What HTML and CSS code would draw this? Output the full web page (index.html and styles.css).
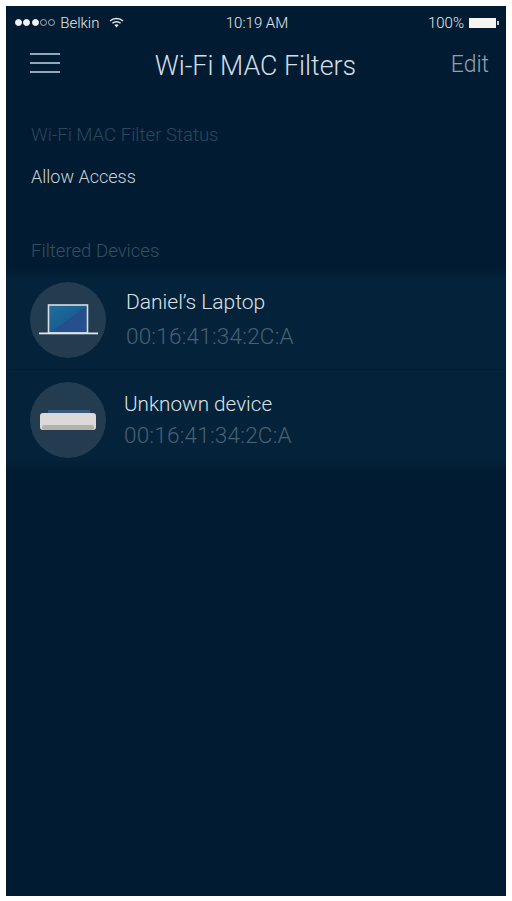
FILE: index.html
```html
<!DOCTYPE html>
<html lang="en">
  <head>
    <meta charset="UTF-8" />
    <title>Wi-Fi MAC Filters</title>
    <link rel="stylesheet" href="styles.css">
  </head>
  <body>
    <div class="phone">
      <div class="status-bar">
        <div class="carrier">
          <span class="dots"><i class="on"></i><i class="on"></i><i class="on"></i><i></i><i></i></span>
          <span>Belkin</span>
          <svg class="wifi" width="15" height="11" viewBox="0 0 15 11">
            <path d="M1 4 C4.5 .8 10.5 .8 14 4" fill="none" stroke="#e4e8ec" stroke-width="1.5" />
            <path d="M3.4 6.2 C5.6 4.2 9.4 4.2 11.6 6.2" fill="none" stroke="#e4e8ec" stroke-width="1.5" />
            <path d="M5.4 8 C6.6 7 8.4 7 9.6 8 L7.5 10.4 Z" fill="#e4e8ec" />
          </svg>
        </div>
        <div class="clock">10:19 AM</div>
        <div class="battery">
          <span>100%</span>
          <span class="batt-body"></span>
          <span class="batt-tip"></span>
        </div>
      </div>

      <div class="nav">
        <div class="burger"><i></i><i></i><i></i></div>
        <div class="nav-title">Wi-Fi MAC Filters</div>
        <div class="nav-edit">Edit</div>
      </div>

      <div class="section-label status-label">Wi-Fi MAC Filter Status</div>
      <div class="status-value">Allow Access</div>

      <div class="section-label devices-label">Filtered Devices</div>

      <div class="device first">
        <div class="avatar">
          <svg width="62" height="36" viewBox="0 0 62 36">
            <defs>
              <linearGradient id="screen" x1="0" y1="0" x2="1" y2="1">
                <stop offset="0" stop-color="#1f6f9e" />
                <stop offset="0.5" stop-color="#1a5f92" />
                <stop offset="0.52" stop-color="#234f8c" />
                <stop offset="1" stop-color="#27508f" />
              </linearGradient>
            </defs>
            <rect x="11.5" y="3" width="39" height="28" fill="url(#screen)" stroke="#d8dee2" stroke-width="1.6" />
            <rect x="2" y="30.5" width="59" height="1.8" fill="#e2e6e8" />
          </svg>
        </div>
        <div class="device-text">
          <div class="device-name">Daniel’s Laptop</div>
          <div class="device-mac">00:16:41:34:2C:A</div>
        </div>
      </div>

      <div class="device second">
        <div class="avatar">
          <svg width="62" height="36" viewBox="0 0 62 36">
            <rect x="11" y="8" width="42" height="6" fill="#3a5a80" />
            <rect x="3" y="11" width="56" height="17" rx="3" fill="#dcdad8" />
            <rect x="5" y="23" width="52" height="5" rx="2" fill="#b5b2ac" />
          </svg>
        </div>
        <div class="device-text">
          <div class="device-name">Unknown device</div>
          <div class="device-mac">00:16:41:34:2C:A</div>
        </div>
      </div>
    </div>
  </body>
</html>
```

FILE: styles.css
```css
html,
body {
  margin: 0;
  padding: 0;
  background-color: #fff;
}
body {
  padding: 6px;
  height: 901px;
  box-sizing: border-box;
  overflow: hidden;
  font-family: Roboto, "Liberation Sans", Arial, sans-serif;
  font-weight: 300;
}
.phone {
  width: 500px;
  height: 890px;
  background-color: #011c32;
  overflow: hidden;
}
.status-bar {
  display: flex;
  justify-content: space-between;
  align-items: center;
  height: 33px;
  padding: 0 7px 0 9px;
  color: #e4e8ec;
  font-size: 15px;
}
.carrier {
  display: flex;
  align-items: center;
  gap: 5px;
  width: 140px;
}
.dots {
  display: flex;
  gap: 1.3px;
}
.dots i {
  width: 7px;
  height: 7px;
  border: 1px solid #aab4bc;
  border-radius: 50%;
  box-sizing: border-box;
}
.dots i.on {
  background-color: #f0f2f4;
  border-color: #f0f2f4;
}
.wifi {
  margin-left: 5px;
}
.battery {
  display: flex;
  align-items: center;
  justify-content: flex-end;
  width: 140px;
}
.batt-body {
  width: 27px;
  height: 10px;
  margin-left: 5px;
  background-color: #f6f4ee;
}
.batt-tip {
  width: 2px;
  height: 4px;
  background-color: #c8ccd0;
  margin-left: 1px;
}
.nav {
  display: flex;
  align-items: center;
  height: 54px;
  padding: 0 17px 0 24px;
}
.burger {
  display: flex;
  flex-direction: column;
  gap: 7.5px;
  width: 30px;
  margin-top: -6px;
}
.burger i {
  height: 1.5px;
  background-color: #93a8b4;
}
.nav-title {
  flex: 1;
  text-align: center;
  font-size: 26.8px;
  color: #d3dde4;
}
.nav-edit {
  font-size: 23px;
  color: #8fa3ae;
  margin-top: -3px;
}
.section-label {
  padding-left: 25px;
  font-size: 18.6px;
  color: #2c475b;
}
.status-label {
  margin-top: 31px;
}
.status-value {
  padding-left: 25px;
  margin-top: 20px;
  font-size: 18px;
  color: #c8d1d8;
}
.devices-label {
  margin-top: 53px;
  color: #34505f;
}
.device {
  display: flex;
  align-items: center;
  height: 100px;
  box-sizing: border-box;
}
.device.first {
  margin-top: 8px;
  background: linear-gradient(#011c32, #04233a 9px);
  border-bottom: 1px solid #021d33;
}
.device.second {
  background: linear-gradient(#04233a 88px, #011c32);
}
.avatar {
  display: flex;
  align-items: center;
  justify-content: center;
  width: 76px;
  height: 76px;
  margin-left: 24px;
  border-radius: 50%;
  background-color: #233c50;
}
.device-text {
  margin-left: 20px;
}
.second .device-text {
  margin-left: 18px;
}
.device-name {
  font-size: 21px;
  color: #dbe2e7;
}
.second .device-name {
  font-size: 20.7px;
}
.device-mac {
  margin-top: 9px;
  font-size: 22.5px;
  letter-spacing: 0.2px;
  color: #466172;
}
.second .device-mac {
  margin-top: 6px;
}
```
